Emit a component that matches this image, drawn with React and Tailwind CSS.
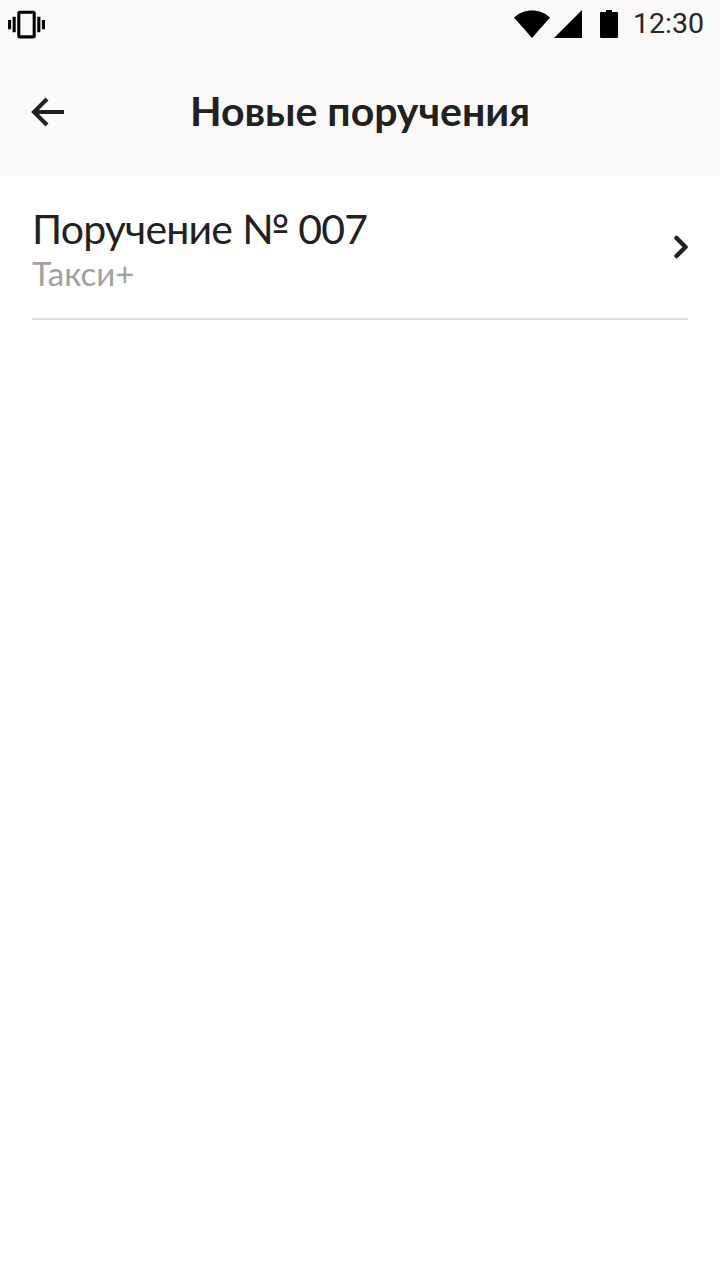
import { ChevronRight } from "lucide-react";

function StatusBar() {
  return (
    <div className="h-12 flex items-center justify-between pl-2 pr-4">
      {/* Vibrate mode */}
      <svg width="37" height="37" viewBox="0 0 24 24" fill="#000">
        <path d="M0 15h2V9H0v6zm3 2h2V7H3v10zm19-8v6h2V9h-2zm-3 8h2V7h-2v10zM16.5 3h-9C6.67 3 6 3.67 6 4.5v15c0 .83.67 1.5 1.5 1.5h9c.83 0 1.5-.67 1.5-1.5v-15c0-.83-.67-1.5-1.5-1.5zM16 19H8V5h8v14z" />
      </svg>

      <div className="flex items-center">
        {/* Wifi */}
        <svg width="36" height="28" viewBox="0 0 36 28" fill="#000">
          <path d="M0 7.5C5 3 11 .5 18 .5S31 3 36 7.5L18 28z" />
        </svg>
        {/* Signal */}
        <svg className="ml-1" width="28" height="28" viewBox="0 0 28 28" fill="#000">
          <path d="M0 28L28 0v28z" />
        </svg>
        {/* Battery */}
        <svg className="ml-[18px]" width="18" height="28" viewBox="0 0 18 28" fill="#000">
          <path d="M1 2h5V0h6v2h5a1 1 0 0 1 1 1v24a1 1 0 0 1-1 1H1a1 1 0 0 1-1-1V3a1 1 0 0 1 1-1z" />
        </svg>
        <span className="ml-[15px] font-['Roboto',sans-serif] text-[28.5px] leading-none text-[#262626]">
          12:30
        </span>
      </div>
    </div>
  );
}

function App() {
  return (
    <div className="min-h-screen bg-white font-['Lato',sans-serif]">
      <div className="bg-[#faf9f7] h-[176px]">
        <StatusBar />

        {/* Toolbar */}
        <div className="relative h-[128px] flex items-center justify-center">
          <svg
            className="absolute left-[30px] top-[48px]"
            width="36"
            height="32"
            viewBox="0 0 36 32"
            fill="none"
            stroke="#212121"
            strokeWidth="4"
          >
            <path d="M34 16H5M17 3L4 16l13 13" />
          </svg>
          <h1 className="text-[41px] leading-[48px] pb-[2px] font-bold text-[#212121]">
            Новые поручения
          </h1>
        </div>
      </div>

      {/* List */}
      <div className="mx-8 h-[144px] border-b-2 border-[#e0e0de] flex items-center justify-between">
        <div className="pt-[3px] pb-px">
          <div className="text-[41px] leading-[44px] tracking-[-0.8px] text-[#212121]">
            Поручение № 007
          </div>
          <div className="mt-[5px] text-[33px] leading-[34px] text-[#a3a19e]">Такси+</div>
        </div>
        <ChevronRight size={36} strokeWidth={3} color="#212121" className="-mr-[11px]" />
      </div>
    </div>
  );
}

export default App;
